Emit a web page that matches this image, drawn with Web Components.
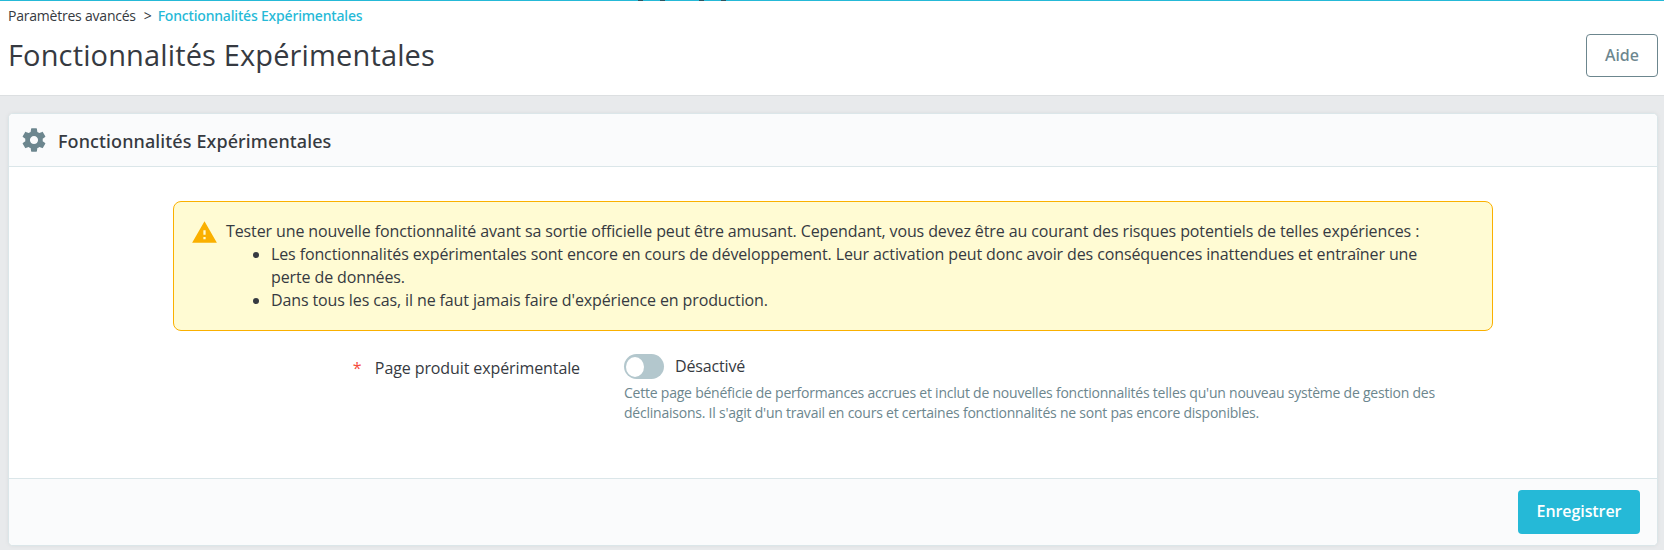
<!DOCTYPE html>
<html lang="fr">
<head>
<meta charset="utf-8">
<title>Fonctionnalités Expérimentales</title>
<style>
html,body{margin:0;height:100%;overflow:hidden}
body{font-family:"Open Sans","Noto Sans",sans-serif;font-size:16px;color:#363a41;background:#e8eaec}
</style>
</head>
<body>
<ps-page>
  <ps-header slot="header">
    <span slot="parent">Paramètres avancés</span>
    <span slot="current">Fonctionnalités Expérimentales</span>
    <span slot="title">Fonctionnalités Expérimentales</span>
    <ps-button slot="action" variant="outline">Aide</ps-button>
  </ps-header>
  <ps-card>
    <span slot="title">Fonctionnalités Expérimentales</span>
    <ps-alert>
      Tester une nouvelle fonctionnalité avant sa sortie officielle peut être amusant. Cependant, vous devez être au courant des risques potentiels de telles expériences :
      <ps-item slot="items">Les fonctionnalités expérimentales sont encore en cours de développement. Leur activation peut donc avoir des conséquences inattendues et entraîner une perte de données.</ps-item>
      <ps-item slot="items">Dans tous les cas, il ne faut jamais faire d'expérience en production.</ps-item>
    </ps-alert>
    <ps-field>
      <span slot="label">Page produit expérimentale</span>
      <ps-switch>Désactivé</ps-switch>
      <span slot="help">Cette page bénéficie de performances accrues et inclut de nouvelles fonctionnalités telles qu'un nouveau système de gestion des déclinaisons. Il s'agit d'un travail en cours et certaines fonctionnalités ne sont pas encore disponibles.</span>
    </ps-field>
    <ps-button slot="footer" variant="primary">Enregistrer</ps-button>
  </ps-card>
</ps-page>
<script>
const define = (name, html) => customElements.define(name, class extends HTMLElement {
  constructor() { super(); this.attachShadow({mode: 'open'}).innerHTML = html; }
});

define('ps-page', `<style>
:host{display:block;height:550px;overflow:hidden}
main{padding:17px 6px 0 8px}
</style><slot name="header"></slot><main><slot></slot></main>`);

define('ps-header', `<style>
:host{display:flex;justify-content:space-between;position:relative;box-sizing:border-box;height:96px;padding:5px 6px 0 8px;background:#fff;border-top:1px solid #25b9d7;border-bottom:1px solid #dcdfe1}
.marks{position:absolute;top:-1px;left:638px;display:flex;height:1px}
.marks i{width:5px;background:#2b5561;margin-right:17px}
.marks i:nth-child(2){margin-right:34px}
nav{display:flex;font-size:14px;line-height:20px;letter-spacing:-.22px}
.sep{margin:0 6px 0 8px}
.cur{color:#25b9d7;font-family:"Noto Sans",sans-serif;font-weight:500;letter-spacing:-.18px}
h1{margin:9px 0 0;font-size:29px;font-weight:400;line-height:40px;letter-spacing:.14px}
.act{margin-top:28px}
</style>
<div class="marks"><i></i><i></i><i></i><i></i></div>
<div><nav><slot name="parent"></slot><span class="sep">&gt;</span><span class="cur"><slot name="current"></slot></span></nav>
<h1><slot name="title"></slot></h1></div>
<div class="act"><slot name="action"></slot></div>`);

define('ps-button', `<style>
:host{display:block}
button{display:block;box-sizing:border-box;font:600 16px/24px "Open Sans","Noto Sans",sans-serif;border-radius:4px;padding:0;margin:0}
:host([variant=outline]) button{width:72px;height:43px;padding-bottom:1px;background:#fff;border:1px solid #6c868e;color:#6c868e;font-family:"Noto Sans",sans-serif;font-weight:500}
:host([variant=primary]) button{width:122px;height:44px;padding-bottom:2px;background:#25b9d7;border:0;color:#fff;letter-spacing:-.08px}
</style><button type="button"><slot></slot></button>`);

define('ps-card', `<style>
:host{display:flex;flex-direction:column;box-sizing:border-box;height:433px;background:#fff;border:1px solid #dbe6e9;border-radius:5px;box-shadow:0 0 4px 0 rgba(0,0,0,.06);overflow:hidden}
header{display:flex;align-items:center;box-sizing:border-box;height:53px;padding:0 11px;background:#fafbfc;border-bottom:1px solid #dbe6e9}
svg{width:28px;height:28px;fill:#6c868e;flex:none;margin-top:-1px}
h3{margin:2px 0 0 10px;font-family:"Noto Sans",sans-serif;font-size:18px;line-height:24px;font-weight:500;letter-spacing:.11px}
.body{flex:1;padding:34px 0 0}
footer{display:flex;justify-content:flex-end;box-sizing:border-box;height:67px;padding:11px 17px;background:#fafbfc;border-top:1px solid #dbe6e9}
</style>
<header><svg viewBox="0 0 24 24"><path d="M19.43 12.98c.04-.32.07-.64.07-.98s-.03-.66-.07-.98l2.11-1.65c.19-.15.24-.42.12-.64l-2-3.46c-.12-.22-.39-.3-.61-.22l-2.49 1c-.52-.4-1.08-.73-1.69-.98l-.38-2.65C14.46 2.18 14.25 2 14 2h-4c-.25 0-.46.18-.49.42l-.38 2.65c-.61.25-1.17.59-1.69.98l-2.49-1c-.23-.09-.49 0-.61.22l-2 3.46c-.13.22-.07.49.12.64l2.11 1.65c-.04.32-.07.65-.07.98s.03.66.07.98l-2.11 1.65c-.19.15-.24.42-.12.64l2 3.46c.12.22.39.3.61.22l2.49-1c.52.4 1.08.73 1.69.98l.38 2.65c.03.24.24.42.49.42h4c.25 0 .46-.18.49-.42l.38-2.65c.61-.25 1.17-.59 1.69-.98l2.49 1c.23.09.49 0 .61-.22l2-3.46c.12-.22.07-.49-.12-.64l-2.11-1.65zM12 15.5c-1.93 0-3.5-1.57-3.5-3.5s1.57-3.5 3.5-3.5 3.5 1.57 3.5 3.5-1.57 3.5-3.5 3.5z"/></svg><h3><slot name="title"></slot></h3></header>
<div class="body"><slot></slot></div>
<footer><slot name="footer"></slot></footer>`);

define('ps-alert', `<style>
:host{display:flex;box-sizing:border-box;width:1320px;height:130px;margin-left:164px;padding:17px 48px 0 17px;background:#fffbd3;border:1px solid #fab000;border-radius:8px;line-height:23px;letter-spacing:-.117px}
svg{width:27px;height:27px;flex:none;fill:#fab000;margin-right:8px}
.text{padding-top:1px}
ul{margin:0;padding:0 0 0 26px;list-style:none}
</style>
<svg viewBox="0 0 24 24"><path d="M1 21h22L12 2 1 21zm12-3h-2v-2h2v2zm0-4h-2v-4h2v4z"/></svg>
<div class="text"><slot></slot><ul><slot name="items"></slot></ul></div>`);

define('ps-item', `<style>
:host{display:flex}
i{flex:none;width:6px;height:6px;border-radius:50%;background:#363a41;margin:9px 12px 0 1px}
</style><i></i><span><slot></slot></span>`);

define('ps-field', `<style>
:host{display:flex;margin-top:22px;letter-spacing:-.1px}
.label{box-sizing:border-box;width:571px;text-align:right;line-height:24px;padding:3px 0 0}
.star{color:#f54c3e;margin-right:13.5px}
.value{margin-left:44px}
.help{width:830px;margin-top:4px;font-size:14px;line-height:20px;letter-spacing:-.225px;color:#6c868e}
</style>
<div class="label"><span class="star">*</span><slot name="label"></slot></div>
<div class="value"><slot></slot><div class="help"><slot name="help"></slot></div></div>`);

define('ps-switch', `<style>
:host{display:flex;height:25px;padding-top:1px;line-height:24px;letter-spacing:-.15px}
.track{box-sizing:border-box;width:40px;height:25px;border-radius:13px;background:#b3c7cd;padding:3px 2px;margin-right:11px}
.knob{width:18px;height:20px;border-radius:50%;background:#fff}
</style><div class="track"><div class="knob"></div></div><slot></slot>`);
</script>
</body>
</html>
